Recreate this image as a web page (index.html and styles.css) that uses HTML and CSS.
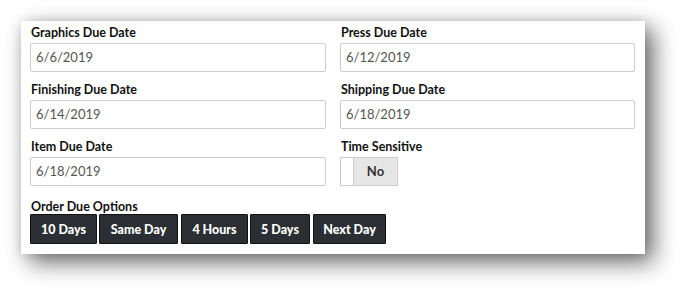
FILE: index.html
```html
<!DOCTYPE html>
<html lang="en">
<head>
    <meta charset="UTF-8">
    <title>Order Due Dates</title>
    <link rel="stylesheet" href="styles.css">
</head>
<body>
    <div class="card">
        <div class="fields">
            <div class="field">
                <label>Graphics Due Date</label>
                <div class="input">6/6/2019</div>
            </div>
            <div class="field">
                <label>Press Due Date</label>
                <div class="input">6/12/2019</div>
            </div>
            <div class="field">
                <label>Finishing Due Date</label>
                <div class="input">6/14/2019</div>
            </div>
            <div class="field">
                <label>Shipping Due Date</label>
                <div class="input">6/18/2019</div>
            </div>
            <div class="field">
                <label>Item Due Date</label>
                <div class="input">6/18/2019</div>
            </div>
            <div class="field">
                <label>Time Sensitive</label>
                <div class="toggle">
                    <span class="toggle-off"></span>
                    <span class="toggle-label">No</span>
                </div>
            </div>
        </div>
        <!-- quick options -->
        <div class="options">
            <label>Order Due Options</label>
            <div class="buttons">
                <button class="w-10d">10 Days</button>
                <button class="w-same">Same Day</button>
                <button class="w-4h">4 Hours</button>
                <button class="w-5d">5 Days</button>
                <button class="w-next">Next Day</button>
            </div>
        </div>
    </div>
</body>
</html>
```

FILE: styles.css
```css
html, body {
    height: 100%;
}
body {
    margin: 0;
    padding-top: 21px;
    box-sizing: border-box;
    background: #fff;
    font-family: "Lato", "Liberation Sans", sans-serif;
}
.card {
    margin-left: 21px;
    width: 624px;
    height: 233px;
    box-sizing: border-box;
    padding: 3px 10px 10px 9px;
    background: #fff;
    box-shadow: 8px 8px 22px rgba(0, 0, 0, 0.6), 0 0 10px rgba(0, 0, 0, 0.1);
}
.fields {
    display: grid;
    grid-template-columns: 296px 295px;
    column-gap: 14px;
    row-gap: 9px;
}
label {
    display: block;
    height: 16px;
    line-height: 18px;
    margin: 0 0 3px 1px;
    font-size: 12.5px;
    font-weight: bold;
    color: #111;
}
.input {
    height: 29px;
    box-sizing: border-box;
    border: 1px solid #ccc;
    border-radius: 2px;
    padding: 0 5px;
    line-height: 27px;
    font-size: 13px;
    color: #555;
}
.toggle {
    display: flex;
    width: 58px;
    height: 29px;
    box-sizing: border-box;
    border: 1px solid #ccc;
}
.toggle-off {
    width: 12px;
    background: #fff;
    border-right: 1px solid #ccc;
}
.toggle-label {
    flex: 1;
    background: #e6e6e6;
    text-align: center;
    line-height: 27px;
    font-size: 13px;
    font-weight: bold;
    color: #333;
}
.options {
    margin-top: 12px;
}
.options label {
    margin-bottom: 0;
}
.buttons {
    display: flex;
    gap: 2px;
}
.buttons button {
    height: 30px;
    padding: 0;
    font-family: inherit;
    font-size: 12.5px;
    font-weight: 900;
    color: #fff;
    background: #2b2f33;
    border: 1px solid #111;
    border-radius: 1px;
}
.w-10d { width: 67px; }
.w-same { width: 79px; }
.w-4h { width: 67px; margin-left: 1px; }
.w-5d { width: 60px; }
.w-next { width: 73px; margin-left: 1px; }
```
